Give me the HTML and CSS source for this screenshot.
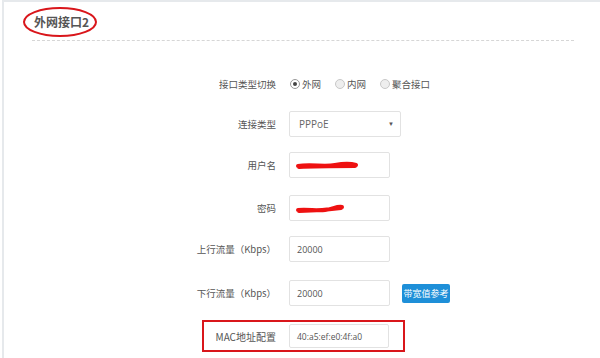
FILE: index.html
```html
<!DOCTYPE html>
<html>
<head>
<meta charset="utf-8">
<link rel="stylesheet" href="styles.css">
</head>
<body>
<div class="panel">
  <div class="head">
    <h2 class="title">外网接口2</h2>
    <svg class="ring" width="76" height="32" viewBox="0 0 76 32"><ellipse cx="38" cy="16" rx="36" ry="14" fill="none" stroke="#d9161b" stroke-width="2"/></svg>
  </div>
  <div class="form">
    <div class="row r-radio">
      <label class="lbl">接口类型切换</label>
      <div class="radios">
        <span class="radio on"></span><span class="rt">外网</span>
        <span class="radio"></span><span class="rt">内网</span>
        <span class="radio"></span><span class="rt">聚合接口</span>
      </div>
    </div>
    <div class="row r-sel">
      <label class="lbl">连接类型</label>
      <div class="input select">PPPoE<span class="caret">▼</span></div>
    </div>
    <div class="row r-user">
      <label class="lbl">用户名</label>
      <div class="input masked">
        <svg class="scribble" width="64" height="10" viewBox="0 0 64 10"><path d="M3 6 C15 4 30 7 40 5 S58 4 61 5 M4 7 C20 6 40 6 60 6" stroke="#ee1111" stroke-width="4" stroke-linecap="round" fill="none"/></svg>
      </div>
    </div>
    <div class="row r-pass">
      <label class="lbl">密码</label>
      <div class="input masked">
        <svg class="scribble" width="52" height="12" viewBox="0 0 52 12"><path d="M3 8 C12 7 22 9 30 8 S42 4 47 5 M4 9 C18 9 32 8 46 6" stroke="#ee1111" stroke-width="4" stroke-linecap="round" fill="none"/></svg>
      </div>
    </div>
    <div class="row r-up">
      <label class="lbl">上行流量（Kbps）</label>
      <div class="input">20000</div>
    </div>
    <div class="row r-down">
      <label class="lbl">下行流量（Kbps）</label>
      <div class="input">20000</div>
      <button class="btn">带宽值参考</button>
    </div>
    <div class="row r-mac">
      <div class="mac-box">
        <label class="lbl">MAC地址配置</label>
        <div class="input">40:a5:ef:e0:4f:a0</div>
      </div>
    </div>
  </div>
</div>
</body>
</html>
```
FILE: styles.css
```css
html, body {
  margin: 0;
  padding: 0;
  background: #fff;
  width: 600px;
  height: 358px;
  overflow: hidden;
  font-family: "Noto Sans CJK SC", "Open Sans", sans-serif;
}
.panel {
  margin-left: 2px;
  border-top: 2px solid #e6e9ec;
  border-left: 2px solid #e6e9ec;
  height: 358px;
  box-sizing: border-box;
}
.head {
  position: relative;
  margin: 0 26px 0 28px;
  padding: 8px 0 6px 0;
  border-bottom: 1px dashed #d6d6d6;
  height: 24px;
}
.title {
  margin: 0;
  font-size: 12px;
  font-weight: bold;
  color: #555;
  line-height: 24px;
  padding-left: 2px;
}
.ring {
  position: absolute;
  left: -10px;
  top: 4px;
}
.form {
  padding-top: 30px;
}
.row {
  display: flex;
  align-items: center;
  height: 26px;
}
.lbl {
  width: 284px;
  text-align: right;
  padding-right: 12px;
  box-sizing: border-box;
  font-size: 9.5px;
  color: #555;
  flex: none;
}
.radios {
  display: flex;
  align-items: center;
  font-size: 9.5px;
  color: #555;
  margin-left: 2px;
}
.radio {
  width: 10px;
  height: 10px;
  border-radius: 50%;
  border: 1px solid #c8c8c8;
  background: #eee;
  box-sizing: border-box;
  position: relative;
  margin-right: 2px;
}
.radio.on {
  background: #fff;
  border-color: #999;
}
.radio.on::after {
  content: "";
  position: absolute;
  left: 2px;
  top: 2px;
  width: 4px;
  height: 4px;
  border-radius: 50%;
  background: #444;
}
.rt { margin-right: 14px; }
.input {
  width: 101px;
  height: 26px;
  border: 1px solid #e2e2e2;
  border-radius: 2px;
  box-sizing: border-box;
  font-size: 9px;
  color: #555;
  padding-left: 7px;
  display: flex;
  align-items: center;
  font-family: "Open Sans", sans-serif;
  margin-left: 1px;
}
.select {
  width: 112px;
  font-size: 10px;
  color: #666;
  padding-left: 9px;
  position: relative;
}
.caret {
  position: absolute;
  right: 6px;
  top: 8px;
  font-size: 6px;
  color: #555;
}
.masked { padding-left: 5px; }
.r-sel { margin-top: 14px; }
.r-user { margin-top: 15px; }
.r-pass { margin-top: 17px; }
.r-up { margin-top: 15px; }
.r-down { margin-top: 18px; }
.r-mac { margin-top: 14px; height: 32px; }
.btn {
  margin-left: 12px;
  background: #1e8fd8;
  color: #fff;
  border: none;
  border-radius: 2px;
  font-size: 9px;
  font-family: "Noto Sans CJK SC", sans-serif;
  height: 19px;
  width: 48px;
  padding: 0;
}
.mac-box {
  margin-left: 198px;
  width: 203px;
  height: 32px;
  border: 2px solid #d9161b;
  box-sizing: border-box;
  display: flex;
  align-items: center;
}
.mac-box .lbl {
  width: 84px;
  font-size: 10px;
}
.mac-box .input {
  height: 24px;
  font-size: 8.5px;
  width: 100px;
}
```
